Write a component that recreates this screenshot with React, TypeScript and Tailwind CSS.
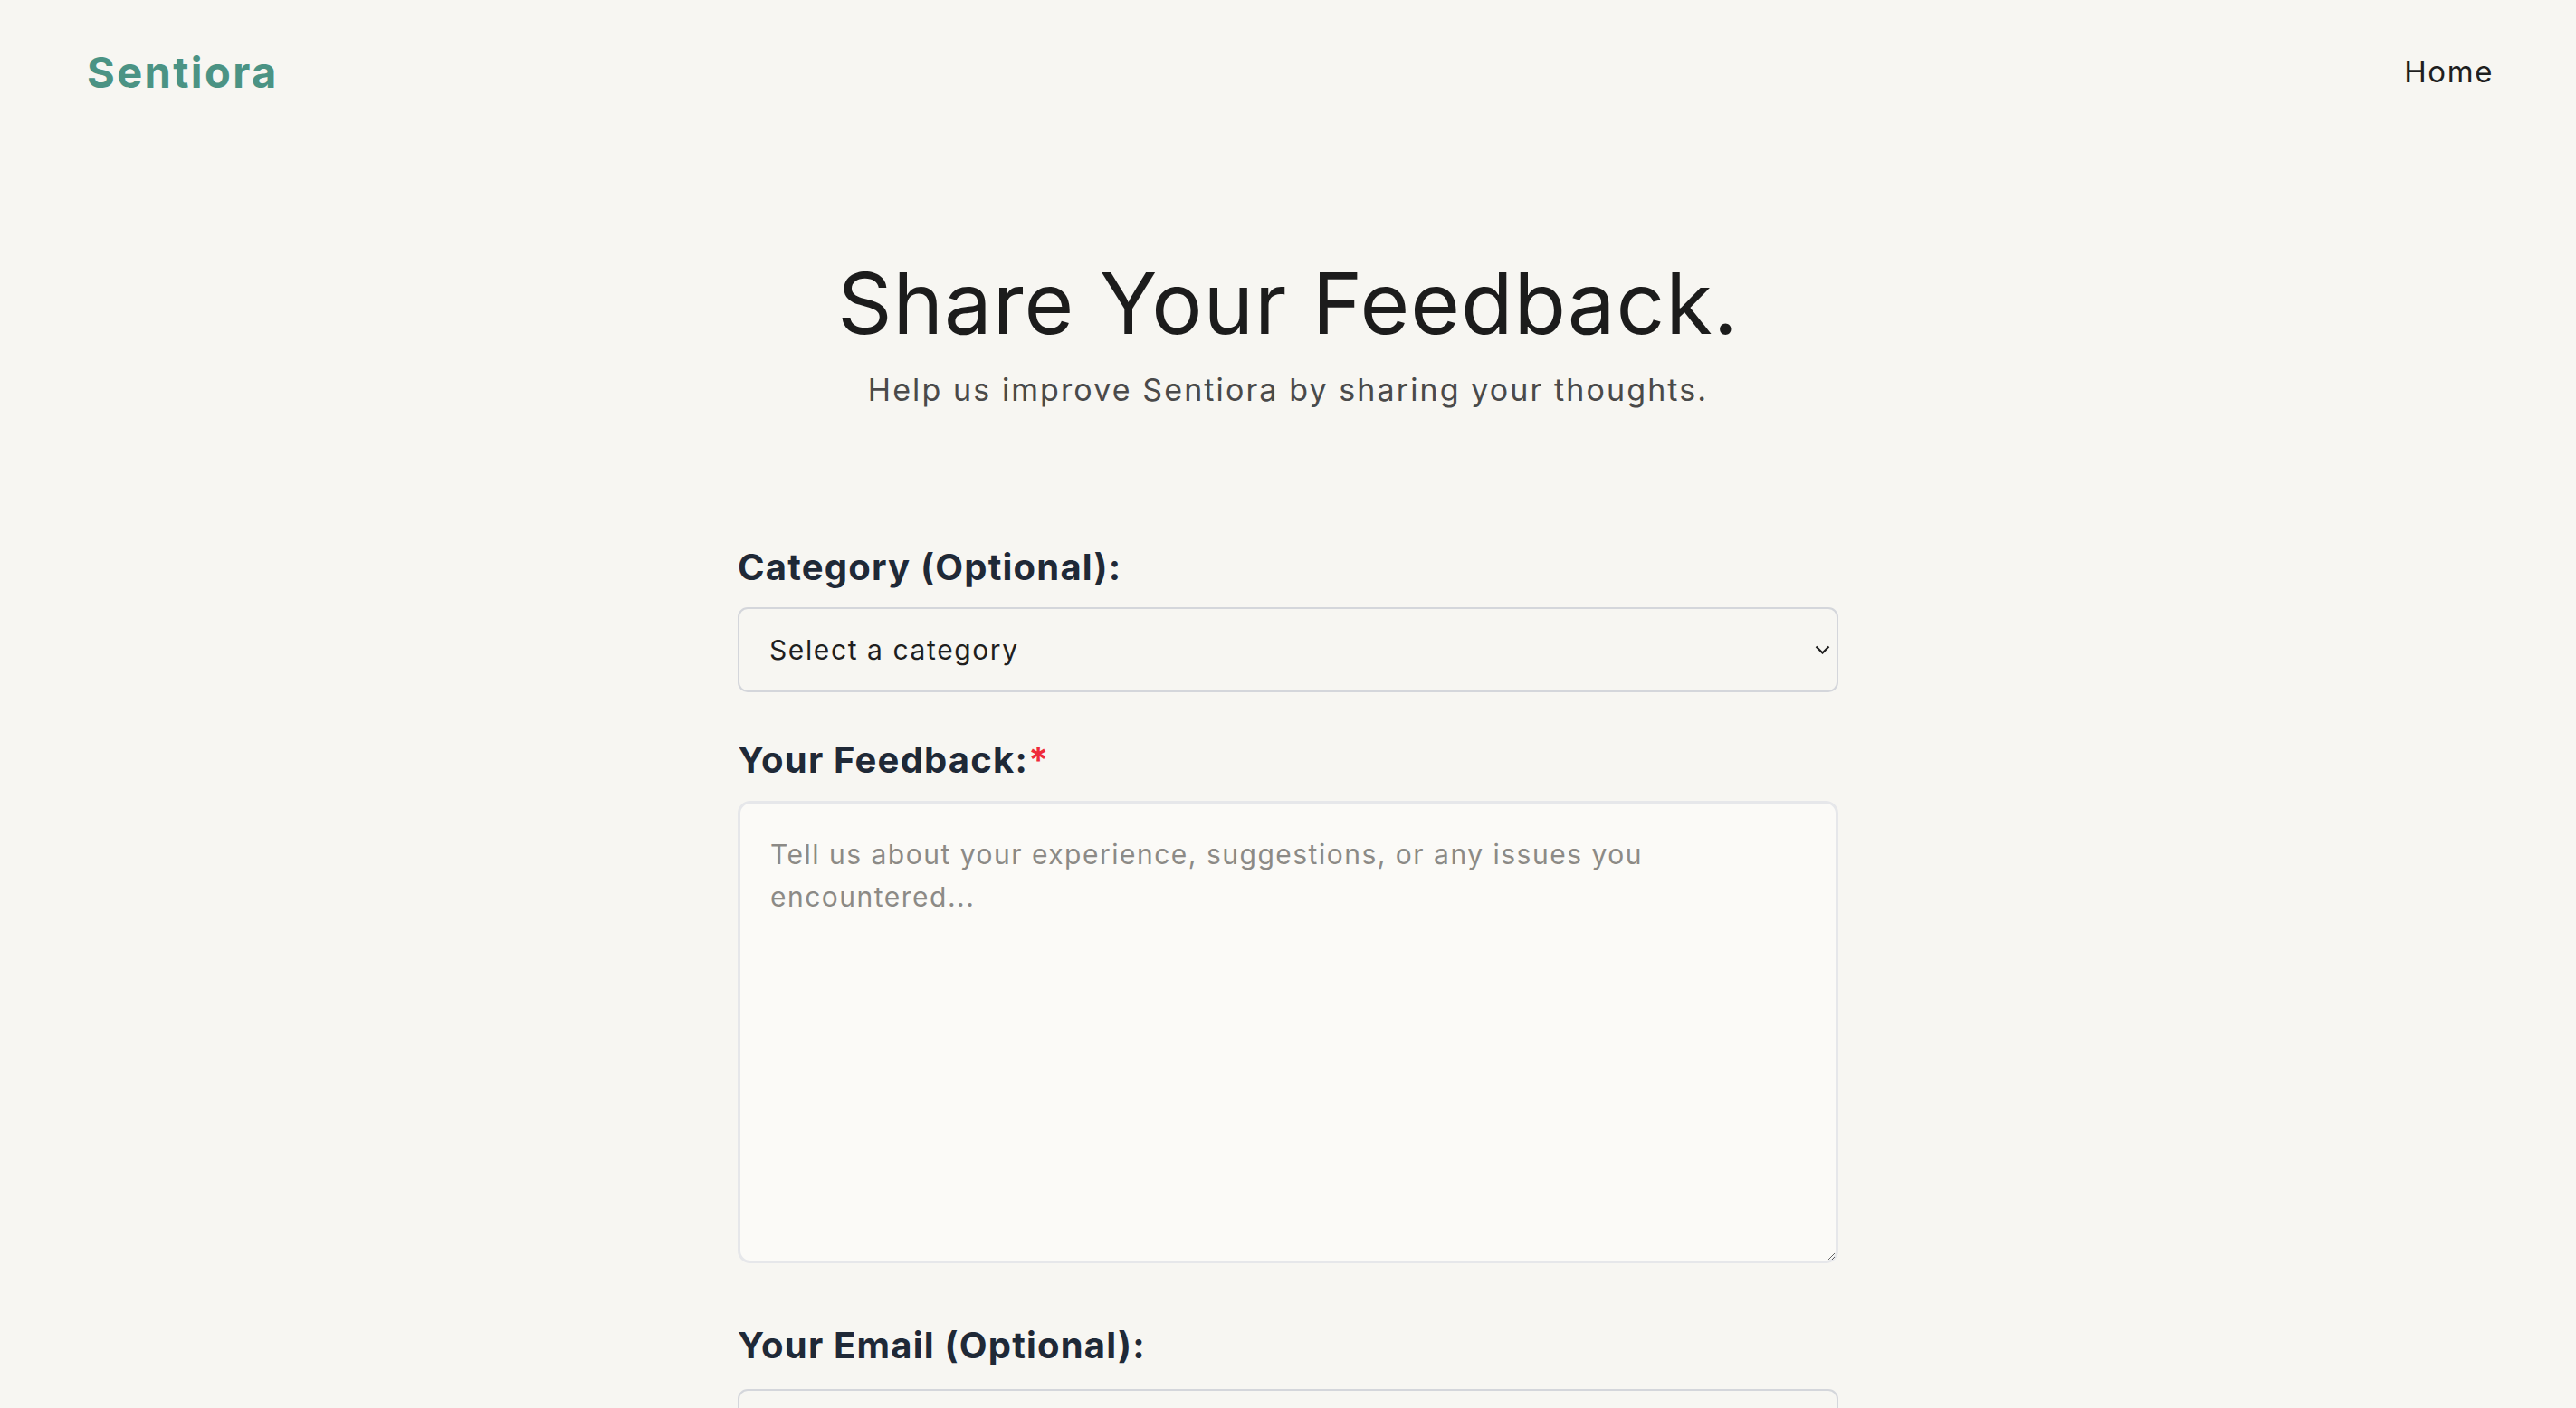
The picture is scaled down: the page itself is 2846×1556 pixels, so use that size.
import React from "react";

const font = { fontFamily: "Inter, 'DejaVu Sans', sans-serif" };

const Header = () => (
  <header className="flex h-[160px] items-center justify-between pl-[96px] pr-[91px]">
    <a href="#" className="text-[47px] font-bold tracking-[2.4px] text-[#4b9384]">
      Sentiora
    </a>
    <nav>
      <a href="#" className="text-[33px] tracking-[1.6px] text-[#1f1f1f]">
        Home
      </a>
    </nav>
  </header>
);

const Chevron = () => (
  <svg
    className="pointer-events-none absolute right-[9px] top-1/2 h-[10px] w-[17px] -translate-y-1/2"
    viewBox="0 0 17 10"
    fill="none"
  >
    <path d="M1.5 1.5 8.5 8.5 15.5 1.5" stroke="#1f1f1f" strokeWidth="2.2" />
  </svg>
);

export default function App() {
  return (
    <div className="min-h-screen bg-[#f7f6f2]" style={font}>
      <Header />

      <main className="flex flex-col items-center">
        <div className="mt-[128px] text-center">
          <h1 className="text-[94px] font-normal leading-none tracking-[0.01em] text-[#1c1c1c]">
            Share Your Feedback.
          </h1>
          <p className="mt-[23px] text-[34px] tracking-[2.1px] text-[#4a4a4a]">
            Help us improve Sentiora by sharing your thoughts.
          </p>
        </div>

        <form className="mt-[151px] flex w-[1216px] flex-col">
          <label className="text-[40px] font-bold leading-none tracking-[1.2px] text-[#1f2937]">
            Category (Optional):
          </label>
          <div className="relative mt-[24px]">
            <select className="h-[94px] w-full appearance-none rounded-[11px] border-2 border-[#d4d6db] bg-[#f7f6f2] px-[33px] text-[30px] tracking-[1.6px] text-[#1f1f1f] outline-none">
              <option>Select a category</option>
              <option>Bug report</option>
              <option>Feature request</option>
              <option>General</option>
            </select>
            <Chevron />
          </div>

          <label className="mt-[55px] text-[40px] font-bold leading-none tracking-[1.2px] text-[#1f2937]">
            Your Feedback:<span className="text-[#ef2b3b]">*</span>
          </label>
          <textarea
            className="mt-[25px] h-[511px] w-full rounded-[14px] border-[3px] border-[#e6e7ea] bg-[#fbfaf7] px-[33px] pb-[27px] pt-[33px] text-[30px] leading-[47px] tracking-[1.5px] text-[#1f1f1f] outline-none placeholder:text-[#8c8a86]"
            placeholder="Tell us about your experience, suggestions, or any issues you encountered..."
          />

          <label className="mt-[71px] text-[40px] font-bold leading-none tracking-[1.2px] text-[#1f2937]">
            Your Email (Optional):
          </label>
          <input
            type="email"
            className="mt-[28px] h-[93px] w-full rounded-[11px] border-2 border-[#d4d6db] bg-[#f7f6f2] px-[33px] text-[30px] outline-none"
          />
          <div className="h-[200px]" />
        </form>
      </main>
    </div>
  );
}
